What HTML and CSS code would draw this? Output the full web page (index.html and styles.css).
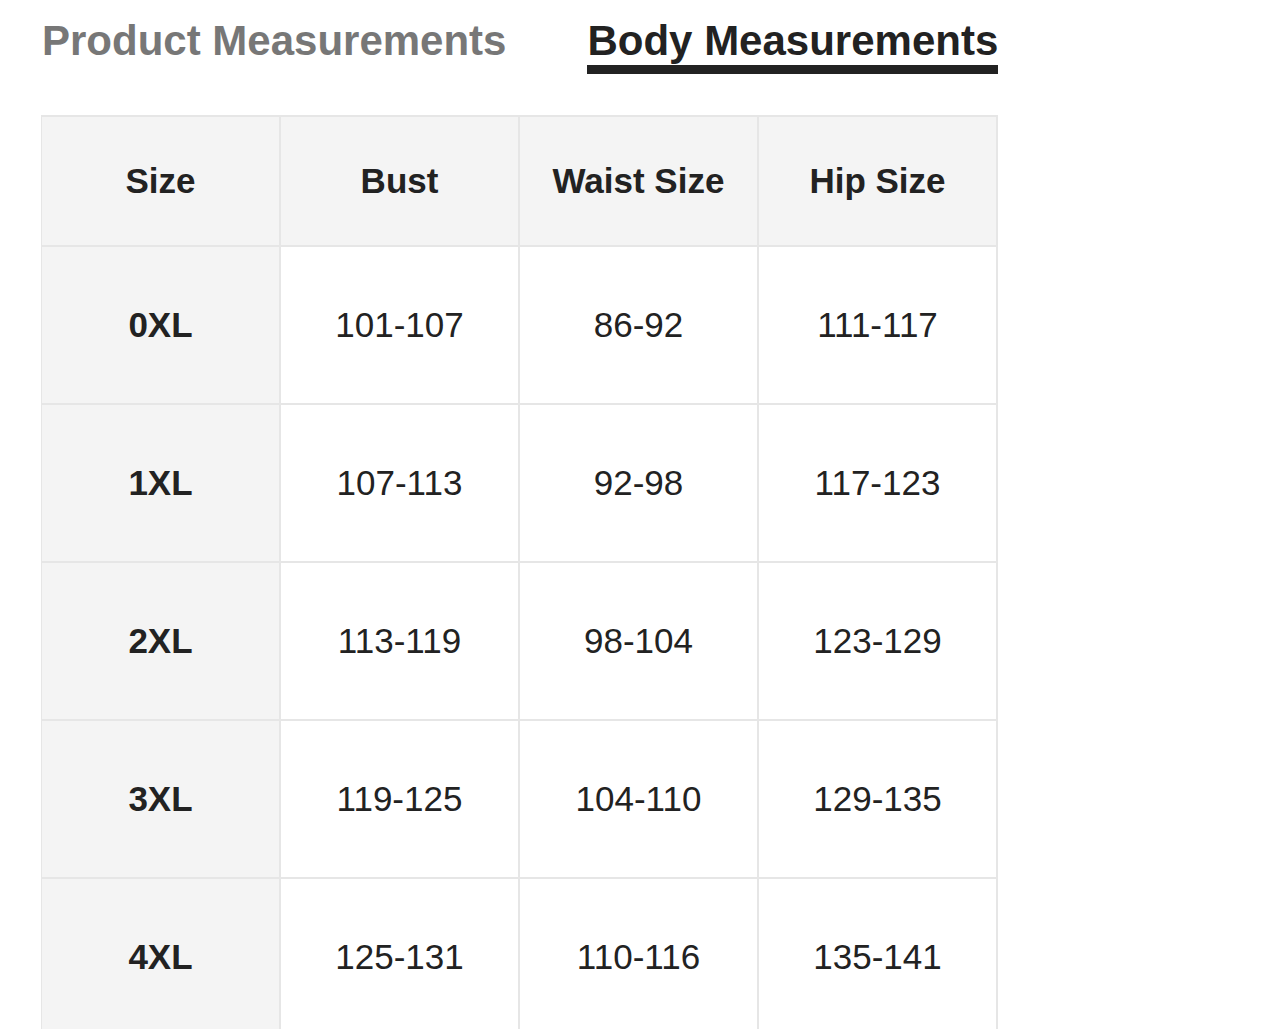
FILE: index.html
```html
<!DOCTYPE html>
<html lang="en">
<head>
<meta charset="utf-8">
<title>Size Chart</title>
<link rel="stylesheet" href="styles.css">
</head>
<body>
<div class="tabs">
  <div class="tab">Product Measurements</div>
  <div class="tab active">Body Measurements</div>
</div>
<div class="chart">
  <div class="cell head">Size</div>
  <div class="cell head">Bust</div>
  <div class="cell head">Waist Size</div>
  <div class="cell head">Hip Size</div>

  <div class="cell size">0XL</div>
  <div class="cell">101-107</div>
  <div class="cell">86-92</div>
  <div class="cell">111-117</div>

  <div class="cell size">1XL</div>
  <div class="cell">107-113</div>
  <div class="cell">92-98</div>
  <div class="cell">117-123</div>

  <div class="cell size">2XL</div>
  <div class="cell">113-119</div>
  <div class="cell">98-104</div>
  <div class="cell">123-129</div>

  <div class="cell size">3XL</div>
  <div class="cell">119-125</div>
  <div class="cell">104-110</div>
  <div class="cell">129-135</div>

  <div class="cell size">4XL</div>
  <div class="cell">125-131</div>
  <div class="cell">110-116</div>
  <div class="cell">135-141</div>
</div>
</body>
</html>
```
FILE: styles.css
```css
html, body {
  margin: 0;
  padding: 0;
  background: #ffffff;
}
body {
  font-family: "Liberation Sans", Arial, Helvetica, sans-serif;
  color: #222222;
  overflow: hidden;
}
.tabs {
  display: flex;
  gap: 81px;
  padding: 17px 0 0 42px;
}
.tab {
  font-size: 42px;
  font-weight: bold;
  line-height: 48px;
  color: #777777;
  border-bottom: 9px solid transparent;
  white-space: nowrap;
}
.tab.active {
  color: #222222;
  border-bottom-color: #222222;
}
.chart {
  margin: 41px 0 0 41px;
  display: grid;
  grid-template-columns: repeat(4, 237px);
  grid-template-rows: 128px repeat(5, 156px);
  gap: 2px;
  width: max-content;
  background: #e6e6e6;
  border: 2px solid #e6e6e6;
  border-left-width: 1px;
}
.cell {
  background: #ffffff;
  display: flex;
  align-items: center;
  justify-content: center;
  font-size: 35px;
  color: #222222;
}
.cell.head {
  background: #f4f4f4;
  font-weight: bold;
}
.cell.size {
  background: #f4f4f4;
  font-weight: bold;
}
```
